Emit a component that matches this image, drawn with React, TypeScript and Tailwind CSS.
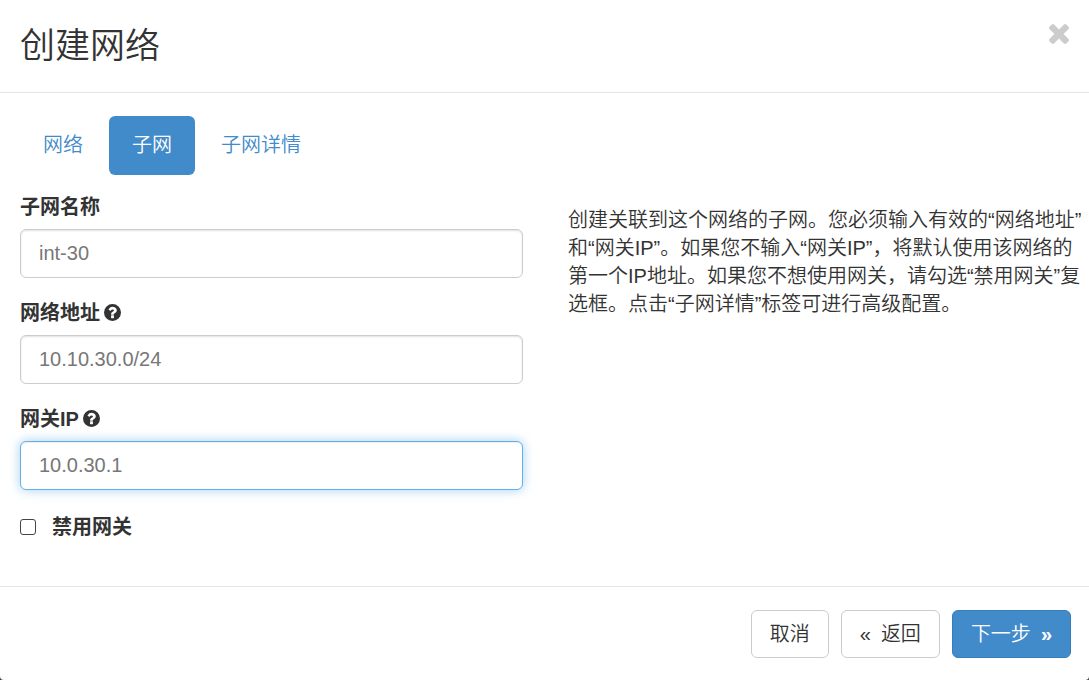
import { useState } from 'react';

const TABS = ['网络', '子网', '子网详情'];

const HelpIcon = () => (
    <svg viewBox="128 128 1536 1536" className="mb-0.5 h-[17px] w-[17px]" fill="currentColor" aria-hidden="true">
        <path
            fillRule="evenodd"
            d="M896 128a768 768 0 1 0 0 1536a768 768 0 1 0 0-1536zM1024 1376v-192q0-14-9-23t-23-9h-192q-14 0-23 9t-9 23v192q0 14 9 23t23 9h192q14 0 23-9t9-23zm256-672q0-88-55.5-163t-138.5-116-170-41q-243 0-371 213-15 24 8 42l132 100q7 6 19 6 16 0 25-12 53-68 86-92 34-24 86-24 48 0 85.5 26t37.5 59q0 38-20 61t-68 45q-63 28-115.5 86.5t-52.5 125.5v36q0 14 9 23t23 9h192q14 0 23-9t9-23q0-19 21.5-49.5t54.5-49.5q32-18 49-28.5t46-35 44.5-48 28-60.5 12.5-81z"
        />
    </svg>
);

const CloseIcon = () => (
    <svg viewBox="110 366 1188 1188" className="h-5 w-5" fill="currentColor" aria-hidden="true">
        <path d="M1298 1322q0 40-28 68l-136 136q-28 28-68 28t-68-28l-294-294-294 294q-28 28-68 28t-68-28l-136-136q-28-28-28-68t28-68l294-294-294-294q-28-28-28-68t28-68l136-136q28-28 68-28t68 28l294 294 294-294q28-28 68-28t68 28l136 136q28 28 28 68t-28 68l-294 294 294 294q28 28 28 68z" />
    </svg>
);

interface FieldProps {
    id: string;
    label: string;
    value: string;
    onChange: (value: string) => void;
    help?: boolean;
    active?: boolean;
}

const Field = ({ id, label, value, onChange, help, active }: FieldProps) => (
    <div className="mb-[21px]">
        <label htmlFor={id} className="mb-2 flex items-center gap-1 font-bold leading-7">
            {label}
            {help && <HelpIcon />}
        </label>
        <input
            id={id}
            type="text"
            value={value}
            onChange={(e) => onChange(e.target.value)}
            className={`block h-[49px] w-full rounded-md border bg-white px-[18px] text-[#777] outline-none ${active
                ? 'border-[#66afe9] shadow-[inset_0_1px_1px_rgba(0,0,0,0.075),0_0_11px_rgba(102,175,233,0.6)]'
                : 'border-[#ccc] shadow-[inset_0_1px_2px_rgba(0,0,0,0.12)]'
                }`}
        />
    </div>
);

export default function App() {
    const [tab, setTab] = useState('子网');
    const [name, setName] = useState('int-30');
    const [cidr, setCidr] = useState('10.10.30.0/24');
    const [gateway, setGateway] = useState('10.0.30.1');
    const [noGateway, setNoGateway] = useState(false);

    return (
        <div className="flex min-h-screen flex-col bg-[#444] font-['Liberation_Sans','Noto_Sans_CJK_SC',sans-serif] text-xl font-[350] text-[#333]">
            <div role="dialog" aria-labelledby="dialog-title" className="flex grow flex-col rounded-b bg-white">
                <div className="flex items-start justify-between border-b border-[#e5e5e5] px-5 pb-[21px] pt-[21px]">
                    <h3 id="dialog-title" className="text-[35px] font-[350] leading-[50px]">创建网络</h3>
                    <button type="button" aria-label="关闭" className="mt-[3px] text-[#ccc] hover:text-[#999]">
                        <CloseIcon />
                    </button>
                </div>

                <div className="grow pb-8 pl-5 pr-1.5 pt-[23px]">
                    <ul className="flex gap-[3px]">
                        {TABS.map((t) => (
                            <li key={t}>
                                <a
                                    href="#"
                                    onClick={(e) => { e.preventDefault(); setTab(t); }}
                                    className={`block rounded-md px-[23px] pb-4 pt-[15px] leading-7 ${t === tab ? 'bg-[#428bca] text-white' : 'text-[#428bca]'}`}
                                >
                                    {t}
                                </a>
                            </li>
                        ))}
                    </ul>

                    <div className="mt-[18px] grid grid-cols-[503fr_515fr] gap-[45px]">
                        <form>
                            <Field id="subnet-name" label="子网名称" value={name} onChange={setName} />
                            <Field id="cidr" label="网络地址" value={cidr} onChange={setCidr} help />
                            <Field id="gateway" label="网关IP" value={gateway} onChange={setGateway} help active />
                            <div className="flex items-center gap-4 pt-0.5 leading-7">
                                <input
                                    id="no-gateway"
                                    type="checkbox"
                                    checked={noGateway}
                                    onChange={(e) => setNoGateway(e.target.checked)}
                                    className="h-4 w-4 appearance-none rounded-[3px] border border-[#444] bg-white checked:bg-[#428bca]"
                                />
                                <label htmlFor="no-gateway" className="font-bold">禁用网关</label>
                            </div>
                        </form>

                        <p className="pt-[13px] leading-7">
                            创建关联到这个网络的子网。您必须输入有效的“网络地址”<wbr />和“网关IP”。如果您不输入“网关IP”，将默认使用该网络的第一个IP地址。如果您不想使用网关，请勾选“禁用网关”复选框。点击“子网详情”标签可进行高级配置。
                        </p>
                    </div>
                </div>

                <div className="flex justify-end gap-3 border-t border-[#e5e5e5] px-[18px] pb-[22px] pt-[23px]">
                    <button type="button" className="h-12 rounded-md border border-[#ccc] bg-white px-[18px] leading-7">
                        取消
                    </button>
                    <button type="button" className="flex h-12 items-center gap-2.5 rounded-md border border-[#ccc] bg-white px-[18px] leading-7">
                        <span>«</span>
                        <span>返回</span>
                    </button>
                    <button type="button" className="flex h-12 items-center gap-2.5 rounded-md border border-[#357ebd] bg-[#428bca] px-[18px] leading-7 text-white">
                        <span>下一步</span>
                        <span className="font-bold">»</span>
                    </button>
                </div>
            </div>
        </div>
    );
}
